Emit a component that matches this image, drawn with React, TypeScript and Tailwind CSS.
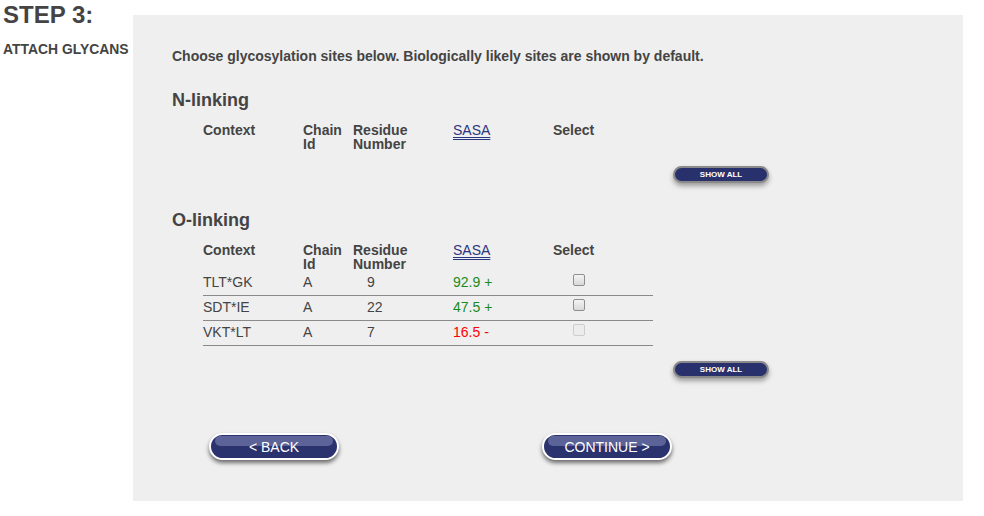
import React from "react";

type Site = { context: string; chain: string; residue: string; sasa: string; good: boolean; enabled: boolean };

const oSites: Site[] = [
  { context: "TLT*GK", chain: "A", residue: "9", sasa: "92.9 +", good: true, enabled: true },
  { context: "SDT*IE", chain: "A", residue: "22", sasa: "47.5 +", good: true, enabled: true },
  { context: "VKT*LT", chain: "A", residue: "7", sasa: "16.5 -", good: false, enabled: false },
];

function HeaderRow() {
  return (
    <div className="flex text-[14px] leading-[14px] font-bold text-[#444]">
      <div className="w-[100px]">Context</div>
      <div className="w-[50px]">
        Chain
        <br />
        Id
      </div>
      <div className="w-[100px]">
        Residue
        <br />
        Number
      </div>
      <div className="w-[100px]">
        <a href="#sasa" className="font-normal text-[#2b3680] underline decoration-double underline-offset-2">
          SASA
        </a>
      </div>
      <div className="w-[100px]">Select</div>
    </div>
  );
}

function ShowAll() {
  return (
    <button className="block ml-[501px] w-[96px] h-[17px] rounded-full bg-[#28316b] border-2 border-[#8a8a8a] text-white text-[8px] font-bold leading-none shadow-[0_3px_5px_rgba(0,0,0,0.35)]">
      SHOW ALL
    </button>
  );
}

function BigButton({ label }: { label: string }) {
  return (
    <button className="relative block w-[130px] h-[27px] rounded-full bg-[#2b336f] border-2 border-white text-white text-[14px] leading-none shadow-[0_3px_4px_rgba(0,0,0,0.55)]">
      <span className="absolute top-[1px] left-[4px] right-[4px] h-[10px] rounded-full bg-[#5b6398]" />
      <span className="relative">{label}</span>
    </button>
  );
}

export default function App() {
  return (
    <div className="flex bg-white w-[984px] h-[516px] font-['Liberation_Sans',Arial,sans-serif] text-[#444]">
      <div className="w-[133px] pl-[3px]">
        <h1 className="text-[24px] leading-[28px] font-bold mt-[1px]">STEP 3:</h1>
        <h3 className="text-[13.9px] leading-[16px] font-bold mt-[12px] whitespace-nowrap">ATTACH GLYCANS</h3>
      </div>
      <div className="mt-[15px] w-[830px] h-[486px] bg-[#efefef] pt-[33px] pl-[39px]">
        <p className="text-[14px] leading-[16px] font-bold">
          Choose glycosylation sites below. Biologically likely sites are shown by default.
        </p>

        <h2 className="mt-[25px] text-[18px] leading-[22px] font-bold">N-linking</h2>
        <div className="mt-[12px] ml-[31px]">
          <HeaderRow />
        </div>
        <div className="mt-[15px]">
          <ShowAll />
        </div>

        <h2 className="mt-[26px] text-[18px] leading-[22px] font-bold">O-linking</h2>
        <div className="mt-[12px] ml-[31px] w-[450px]">
          <HeaderRow />
          {oSites.map((s) => (
            <div key={s.context} className="flex border-b border-[#8a8a8a] pt-[3px] pb-[5px] text-[14px] leading-[16px]">
              <div className="w-[100px]">{s.context}</div>
              <div className="w-[50px]">{s.chain}</div>
              <div className="w-[100px] pl-[14px]">{s.residue}</div>
              <div className={`w-[100px] ${s.good ? "text-[#1a8a1a]" : "text-[#ff0000]"}`}>{s.sasa}</div>
              <div className="w-[100px] pl-[20px]">
                <input
                  type="checkbox"
                  disabled={!s.enabled}
                  className={`appearance-none block w-[12px] h-[12px] rounded-[2px] border ${
                    s.enabled
                      ? "border-[#8f8f8f] bg-gradient-to-b from-[#f4f4f4] to-[#d9d9d9]"
                      : "border-[#cdcdcd] bg-[#ececec]"
                  }`}
                />
              </div>
            </div>
          ))}
        </div>
        <div className="mt-[15px]">
          <ShowAll />
        </div>

        <div className="mt-[55px] flex pl-[37px] gap-[203px]">
          <BigButton label="< BACK" />
          <BigButton label="CONTINUE >" />
        </div>
      </div>
    </div>
  );
}
